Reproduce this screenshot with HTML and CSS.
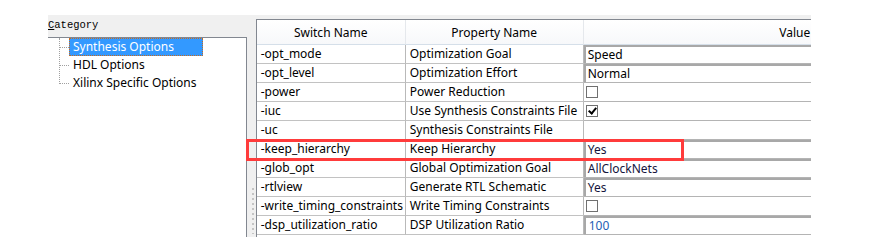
FILE: index.html
```html
<!DOCTYPE html>
<html lang="en">
<head>
  <meta charset="UTF-8" />
  <title>Synthesis Options</title>
  <link rel="stylesheet" href="styles.css">
</head>
<body>
  <div class="dialog">
    <div class="category">
      <div class="category-label"><u>C</u>ategory</div>
      <div class="tree">
        <div class="tree-line"></div>
        <div class="tree-item selected"><span>Synthesis Options</span></div>
        <div class="tree-item"><span>HDL Options</span></div>
        <div class="tree-item"><span>Xilinx Specific Options</span></div>
      </div>
    </div>

    <div class="splitter"><div class="grip"></div></div>

    <div class="props">
      <table class="grid">
        <colgroup>
          <col class="c-switch">
          <col class="c-prop">
          <col class="c-value">
        </colgroup>
        <thead>
          <tr>
            <th>Switch Name</th>
            <th>Property Name</th>
            <th>Value</th>
          </tr>
        </thead>
        <tbody>
          <tr><td>-opt_mode</td><td>Optimization Goal</td><td class="val"><div class="combo">Speed</div></td></tr>
          <tr><td>-opt_level</td><td>Optimization Effort</td><td class="val"><div class="combo">Normal</div></td></tr>
          <tr><td>-power</td><td>Power Reduction</td><td class="val"><span class="check"></span></td></tr>
          <tr><td>-iuc</td><td>Use Synthesis Constraints File</td><td class="val"><span class="check on"></span></td></tr>
          <tr><td>-uc</td><td>Synthesis Constraints File</td><td class="val"></td></tr>
          <tr><td>-keep_hierarchy</td><td>Keep Hierarchy</td><td class="val"><div class="combo navy">Yes</div></td></tr>
          <tr><td>-glob_opt</td><td>Global Optimization Goal</td><td class="val"><div class="combo navy">AllClockNets</div></td></tr>
          <tr><td>-rtlview</td><td>Generate RTL Schematic</td><td class="val"><div class="combo navy">Yes</div></td></tr>
          <tr><td>-write_timing_constraints</td><td>Write Timing Constraints</td><td class="val"><span class="check"></span></td></tr>
          <tr><td>-dsp_utilization_ratio</td><td>DSP Utilization Ratio</td><td class="val"><div class="combo blue">100</div></td></tr>
        </tbody>
      </table>
    </div>
  </div>

  <div class="mark"></div>
</body>
</html>
```

FILE: styles.css
```css
body {
  margin: 0;
  background: #fff;
  font-family: "Noto Sans", "Open Sans", sans-serif;
  font-size: 12px;
  color: #000;
  position: relative;
  width: 872px;
  height: 247px;
  overflow: hidden;
}
.dialog {
  display: flex;
  margin: 15px 0 0 48px;
  width: 763px;
  height: 222px;
  background: #f0f0f0;
  overflow: hidden;
}

/* left: category tree */
.category {
  width: 199px;
  display: flex;
  flex-direction: column;
}
.category-label {
  height: 22px;
  padding-top: 4px;
  box-sizing: border-box;
  font-family: "Liberation Mono", monospace;
  font-size: 10.5px;
  line-height: 12px;
}
.category-label u {
  text-underline-offset: 1px;
}
.tree {
  flex: 1;
  position: relative;
  background: #fff;
  border-top: 1px solid #828790;
  border-right: 1px solid #828790;
}
.tree-line {
  position: absolute;
  left: 11px;
  top: 0;
  height: 46px;
  border-left: 1px dotted #a0a0a0;
}
.tree-item {
  display: flex;
  align-items: center;
  height: 18px;
  padding-left: 12px;
}
.tree-item::before {
  content: "";
  width: 9px;
  border-top: 1px dotted #a0a0a0;
}
.tree-item span {
  padding: 0 3px 0 4px;
  line-height: 18px;
  font-size: 12px;
}
.tree-item.selected span {
  background: #3399ff;
  color: #fff;
  width: 134px;
  box-sizing: border-box;
  outline: 1px dotted #c86a1e;
  outline-offset: -1px;
}

/* splitter */
.splitter {
  width: 9px;
}
.grip {
  margin: 173px 0 0 5px;
  width: 2px;
  height: 46px;
  background: repeating-linear-gradient(#c4c4c4 0 2px, transparent 2px 5px);
}

/* right: property grid */
.props {
  width: 555px;
  margin-top: 4px;
  background: #fff;
  border-left: 1px solid #828790;
  border-top: 1px solid #828790;
  overflow: hidden;
}
.grid {
  border-collapse: separate;
  border-spacing: 0;
  table-layout: fixed;
  width: 750px;
}
.c-switch { width: 149px; }
.c-prop { width: 178px; }
.c-value { width: 423px; }
.grid th {
  height: 24px;
  padding: 0;
  font-weight: normal;
  text-align: center;
  background: linear-gradient(#ffffff, #f7f8fa);
  border-right: 1px solid #e5e8ec;
  border-bottom: 1px solid #d5dfe9;
}
.grid td {
  height: 18px;
  padding: 0 0 0 4px;
  line-height: 18px;
  white-space: nowrap;
  overflow: hidden;
  border-right: 1px solid #b9b9b9;
  border-bottom: 1px solid #c2c2c2;
}
.grid td.val {
  padding: 0;
  vertical-align: top;
  border-bottom-color: #b4b4b4;
}
.combo {
  height: 16px;
  line-height: 16px;
  padding-left: 2px;
  border-top: 2px solid #a8a8a8;
  border-left: 2px solid #a8a8a8;
}
.combo.navy { color: #14143c; }
.combo.blue { color: #1e5eb4; padding-left: 3px; }
.check {
  display: block;
  margin: 3px 0 0 2px;
  width: 10px;
  height: 10px;
  border: 1px solid #707070;
  background: #fff;
  position: relative;
}
.check.on::after {
  content: "";
  position: absolute;
  left: 3px;
  top: 0px;
  width: 3px;
  height: 6px;
  border: solid #000;
  border-width: 0 2px 2px 0;
  transform: rotate(40deg);
}

/* annotation drawn over the grid */
.mark {
  position: absolute;
  left: 246px;
  top: 139px;
  width: 432px;
  height: 16px;
  border: 3px solid #ff3b3b;
}
```
